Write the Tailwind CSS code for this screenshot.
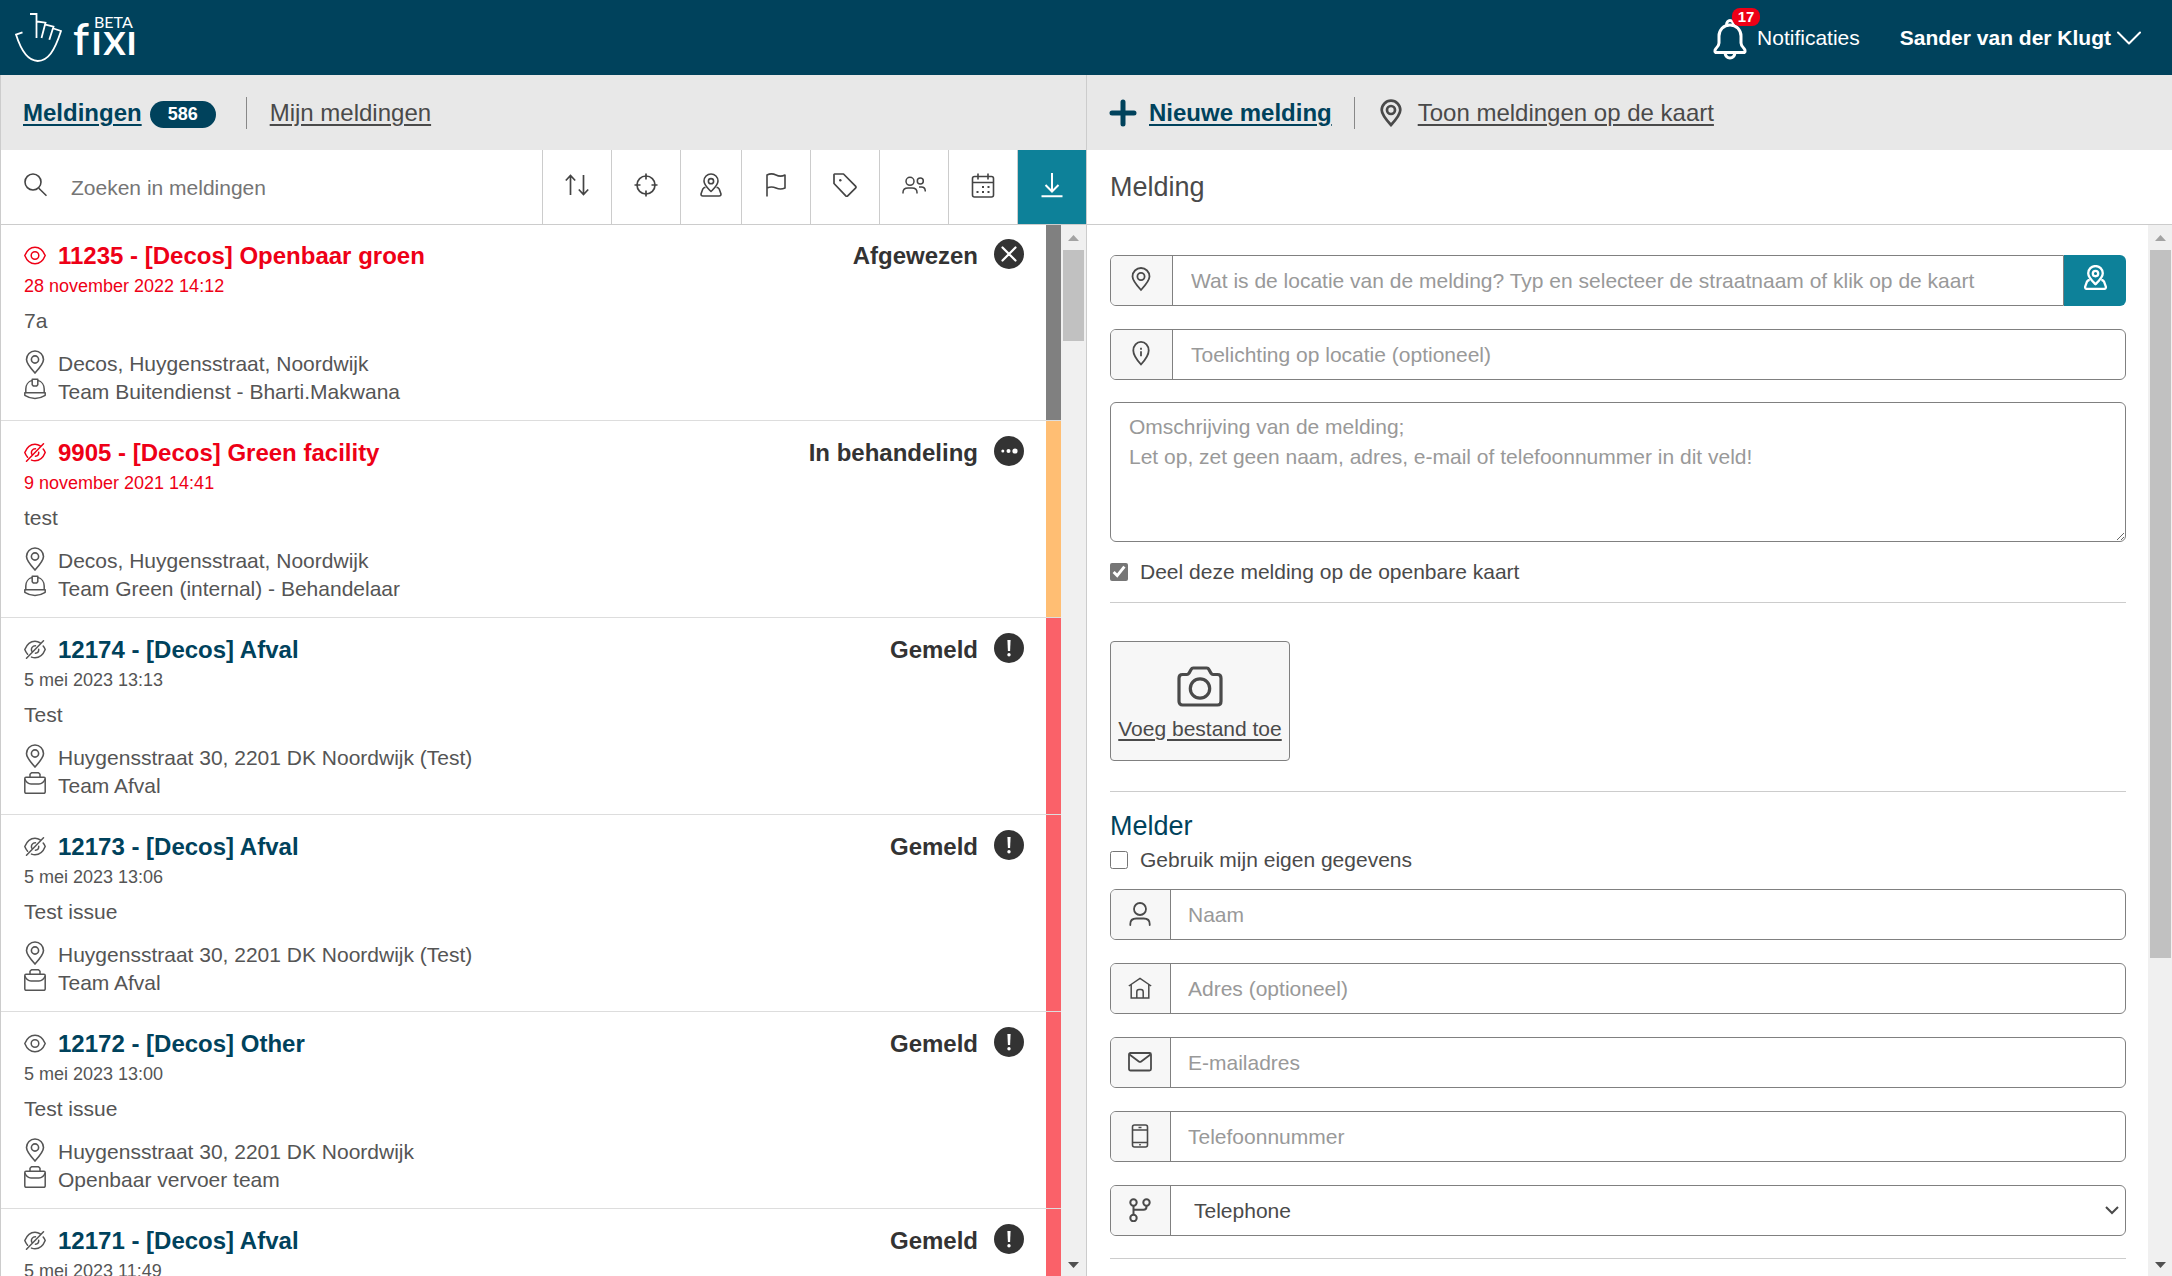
<!DOCTYPE html>
<html lang="nl">
<head>
<meta charset="utf-8">
<title>Fixi - Meldingen</title>
<script src="https://cdn.jsdelivr.net/npm/@tailwindcss/browser@4"></script>
</head>
<body class="flex h-screen flex-col overflow-hidden bg-white font-['Liberation_Sans',Arial,sans-serif] text-[21px] leading-[28px] text-[#555]">

<!-- Icon set -->
<svg class="hidden" aria-hidden="true">
  <symbol id="eye" viewBox="0 0 22 22"><g fill="none" stroke="currentColor" stroke-width="1.500"><path d="M.8 10.500C3 5 7 2.200 11 2.200S19 5 21.200 10.500C19 16 15 18.800 11 18.800S3 16 .8 10.500z"/><circle cx="11" cy="10.500" r="3.800"/></g></symbol>
  <symbol id="eye-off" viewBox="0 0 22 22"><g fill="none" stroke="currentColor" stroke-width="1.500" stroke-linecap="round"><path d="M3.600 15.200C2.400 13.900 1.500 12.400 .8 10.500 3 5 7 2.200 11 2.200c1.900 0 3.700.6 5.200 1.700M19.200 7c.8 1 1.500 2.200 2 3.500C19 16 15 18.800 11 18.800c-1.200 0-2.400-.3-3.500-.7M2.500 19.200 19.500 1.800M7.800 12.200C6.600 9.300 8.600 6.600 11.500 6.700M14.700 10.200c.2 2.200-1.300 3.900-3.300 4.100"/></g></symbol>
  <symbol id="pin" viewBox="0 0 22 24"><g fill="none" stroke="currentColor"><path d="M11 23C6 17.500 2.500 13.500 2.500 9.500a8.500 8.500 0 0 1 17 0C19.500 13.500 16 17.500 11 23z"/><circle cx="11" cy="9.500" r="3.600"/></g></symbol>
  <symbol id="pin-info" viewBox="0 0 22 24"><g fill="none" stroke="currentColor"><path d="M11 23.500C6 18 3.300 14 3.300 9.500a7.700 8.700 0 0 1 15.400 0C18.700 14 16 18 11 23.500z"/><path d="M11 6.800v1.900M11 10.300v5"/></g></symbol>
  <symbol id="helmet" viewBox="0 0 22 22"><g fill="none" stroke="currentColor" stroke-width="1.500" stroke-linejoin="round"><path d="M.8 14.800h20.400v2.500c-6.400 4-14 4-20.400 0zM1.800 14.800V11c0-4 2.600-7.600 6.300-8.600M20.200 14.800V11c0-4-2.600-7.600-6.300-8.600M8.200 1.200h5.600v5.600l-1.300 1.300h-3L8.200 6.800z"/></g></symbol>
  <symbol id="case" viewBox="0 0 22 22"><g fill="none" stroke="currentColor" stroke-width="1.500" stroke-linejoin="round"><rect x=".8" y="5.300" width="20.400" height="16" rx="1.200"/><path d="M6 5.300V2.300L7.500.8h7L16 2.300v3M.8 7c1.600 3.600 4.500 4.900 6.200 4.900h8c1.700 0 4.600-1.300 6.200-4.900"/></g></symbol>
  <symbol id="map-pin" viewBox="0 0 22 24"><g fill="none" stroke="currentColor" stroke-linejoin="round"><path d="M11 18.500C7.500 15 4 12 4 8a7 7 0 0 1 14 0c0 4-3.500 7-7 10.500z"/><circle cx="11" cy="8.200" r="2.600"/><path d="M5.500 14.500H4.300L2.800 16 1 21c0 1.300.6 2 1.800 2h16.400c1.200 0 1.800-.7 1.800-2l-1.800-5-1.500-1.500h-1.200"/></g></symbol>
  <symbol id="status-x" viewBox="0 0 30 30"><circle cx="15" cy="15" r="15" fill="#333"/><path d="M8.500 8.500l13 13M21.500 8.500l-13 13" stroke="#fff" stroke-width="2.200" stroke-linecap="round"/></symbol>
  <symbol id="status-dots" viewBox="0 0 30 30"><circle cx="15" cy="15" r="15" fill="#333"/><g fill="#fff"><circle cx="8.800" cy="15" r="1.500"/><circle cx="14.500" cy="15" r="2"/><circle cx="21" cy="15" r="2.600"/></g></symbol>
  <symbol id="status-bang" viewBox="0 0 30 30"><circle cx="15" cy="15" r="15" fill="#333"/><path d="M13.400 7h3.200l-.5 11h-2.200z" fill="#fff"/><circle cx="15" cy="21.700" r="1.700" fill="#fff"/></symbol>
</svg>

<header class="flex h-[75px] shrink-0 items-center bg-[#00425c] text-white">
  <a href="#" aria-label="Fixi beta" class="block">
    <svg width="140" height="75" viewBox="0 0 140 75" fill="none" stroke="#fff" stroke-width="1.800">
      <path d="M30 14h6.500v24M37 21.500l8.500 1.200L41.500 38M45.500 24.700l8 2-4.200 13M22.500 32.300 16 34.600C21.500 52 28 61 37.700 61 48 61 54.500 51 61 31l-7.500-2.500"/>
      <g fill="#fff" stroke="none" font-family="Lato, sans-serif">
        <text x="73 91 103 126" y="55" font-size="45" font-weight="600">fıxı</text>
        <text x="94" y="28" font-size="16">BETA</text>
      </g>
    </svg>
  </a>
  <a href="#" class="relative ml-auto flex items-center">
    <svg class="mt-0.5" width="34" height="42" viewBox="0 0 34 42" fill="none" stroke="#fff" stroke-width="3"><path d="M17 7c-6.500 0-11 5-11 11v7c0 2.500-1.300 4-3 5.500-1.500 1.500-1.500 4 .5 4h27c2 0 2-2.500.5-4-1.700-1.500-3-3-3-5.500v-7c0-6-4.500-11-11-11zM13.500 7c0-6 7-6 7 0M12 35c1 6.500 9 6.500 10 0"/></svg>
    <span class="absolute -top-2 left-[19px] h-[18px] w-7 rounded-lg bg-[#ee0016] text-center text-[15px] leading-[18px] font-bold">17</span>
    <span class="ml-2.5">Notificaties</span>
  </a>
  <button type="button" class="mr-[31px] ml-10 flex items-center gap-1.5 font-bold">Sander van der Klugt
    <svg width="24" height="14" viewBox="0 0 24 14" fill="none" stroke="#fff" stroke-width="2" stroke-linecap="round" stroke-linejoin="round"><path d="M1 1.500l11 11 11-11"/></svg>
  </button>
</header>

<main class="grid min-h-0 flex-1 grid-cols-2">

  <section class="flex min-h-0 flex-col border-l border-[#ccc]">
    <nav class="flex h-[75px] shrink-0 items-center bg-[#e8e8e8] pl-[22px] text-2xl">
      <a href="#" class="font-bold text-[#00425c] underline decoration-2 underline-offset-3">Meldingen</a>
      <span class="mt-1 ml-2 h-[27px] w-[66px] rounded-full bg-[#00425c] text-center text-lg leading-[27px] font-bold text-white">586</span>
      <span class="ml-[30px] h-8 w-px bg-[#888]"></span>
      <a href="#" class="ml-[23px] text-[#4a4a4a] underline decoration-2 underline-offset-3">Mijn meldingen</a>
    </nav>

    <div class="flex h-[75px] shrink-0 border-b border-[#ccc] text-[#444]">
      <label class="flex flex-1 items-center pl-[23px]">
        <svg class="mb-1" width="23" height="24" viewBox="0 0 23 24" fill="none" stroke="currentColor" stroke-width="1.6"><circle cx="9" cy="9" r="8"/><path d="M14.800 15.200l7.700 7.600"/></svg>
        <input type="search" aria-label="Zoeken in meldingen" placeholder="Zoeken in meldingen" class="ml-6 h-full flex-1 pt-0.5 outline-none placeholder:text-[#757575]">
      </label>
      <button type="button" aria-label="Sorteren" class="flex w-[69px] items-center justify-center border-l border-[#ccc] pb-1"><svg width="24" height="24" viewBox="0 0 24 24" fill="none" stroke="currentColor" stroke-width="1.700"><path d="M5.500 22V3M.8 7.500 5.500 2.500l4.700 5M18.500 2v19M13.800 16.500l4.700 5 4.700-5"/></svg></button>
      <button type="button" aria-label="Mijn locatie" class="flex w-[69px] items-center justify-center border-l border-[#ccc] pb-1"><svg width="24" height="24" viewBox="0 0 24 24" fill="none" stroke="currentColor" stroke-width="1.700"><circle cx="12" cy="12" r="9"/><path d="M12 .5v6M12 17.500v6M.5 12h6M17.500 12h6"/></svg></button>
      <button type="button" aria-label="Locatie" class="flex w-[61px] items-center justify-center border-l border-[#ccc] pb-1"><svg width="22" height="24" stroke-width="1.600"><use href="#map-pin"/></svg></button>
      <button type="button" aria-label="Status" class="flex w-[69px] items-center justify-center border-l border-[#ccc] pb-1"><svg width="20" height="24" viewBox="0 0 20 24" fill="none" stroke="currentColor" stroke-width="1.600" stroke-linejoin="round"><path d="M1 23.500V2c3-1.500 6-1.500 9 0s6 1.500 9 0v13c-3 1.300-6 1.300-9 0s-6-1.300-9 0"/></svg></button>
      <button type="button" aria-label="Categorie" class="flex w-[69px] items-center justify-center border-l border-[#ccc] pb-1"><svg width="24" height="24" viewBox="0 0 24 24" fill="none" stroke="currentColor" stroke-width="1.700" stroke-linejoin="round"><path d="M1.500 1h9l12 12.200c.6.600.6 1.300 0 1.900l-7.800 7.800c-.6.600-1.300.6-1.900 0L1 10.500V1.500z"/><circle cx="7.300" cy="7.300" r="1.200" fill="currentColor" stroke="none"/></svg></button>
      <button type="button" aria-label="Teams" class="flex w-[69px] items-center justify-center border-l border-[#ccc] pb-1"><svg width="24" height="24" viewBox="0 0 24 24" fill="none" stroke="currentColor" stroke-width="1.500"><circle cx="8" cy="8.300" r="4"/><path d="M1 20.500v-1c0-3.500 2.500-4.500 5-4.500h4c2.500 0 5 1 5 4.500v1"/><circle cx="18.300" cy="8" r="3"/><path d="M17 14h2.500c2.500 0 3.800 1.500 3.800 4.500"/></svg></button>
      <button type="button" aria-label="Datum" class="flex w-[69px] items-center justify-center border-l border-[#ccc] pb-1"><svg width="24" height="25" viewBox="0 0 24 25" fill="none" stroke="currentColor" stroke-width="1.600"><rect x="1.500" y="3.500" width="21" height="20.500" rx="2"/><path d="M1.500 9.500h21M7 .5v6M17 .5v6"/><path d="M11 14h2M16.500 14h2M5.500 19h2M11 19h2M16.500 19h2" stroke-width="1.800"/></svg></button>
      <button type="button" aria-label="Downloaden" class="flex w-[69px] items-center justify-center border-l border-[#ccc] bg-[#0d8199] pb-1 text-white"><svg width="24" height="26" viewBox="0 0 24 26" fill="none" stroke="currentColor" stroke-width="2"><path d="M12 1v18M5.500 13l6.500 6.500 6.500-6.500M1.500 24.300h21"/></svg></button>
    </div>

    <div class="flex min-h-0 flex-1">
      <div class="min-w-0 flex-1 overflow-hidden">

        <article class="-mt-px flex border-b border-[#ddd]">
          <div class="flex-1 pt-4 pb-3.5 pl-[23px]">
            <div class="flex h-8 items-center gap-3 text-2xl font-bold text-[#ee0016]"><svg width="22" height="22"><use href="#eye"/></svg><a href="#">11235 - [Decos] Openbaar groen</a></div>
            <p class="mt-0.5 text-lg leading-6 text-[#ee0016]">28 november 2022 14:12</p>
            <p class="mt-[9px]">7a</p>
            <p class="mt-[15px] flex gap-3"><svg width="22" height="24" stroke-width="1.600"><use href="#pin"/></svg>Decos, Huygensstraat, Noordwijk</p>
            <p class="flex gap-3"><svg width="22" height="22"><use href="#helmet"/></svg>Team Buitendienst - Bharti.Makwana</p>
          </div>
          <div class="mt-4 flex h-8 items-center gap-4 pr-[22px] text-2xl font-bold text-[#333]">Afgewezen<svg class="mb-1" width="30" height="30"><use href="#status-x"/></svg></div>
          <div class="w-[15px] bg-[#808080]"></div>
        </article>

        <article class="flex border-b border-[#ddd]">
          <div class="flex-1 pt-4 pb-3.5 pl-[23px]">
            <div class="flex h-8 items-center gap-3 text-2xl font-bold text-[#ee0016]"><svg width="22" height="22"><use href="#eye-off"/></svg><a href="#">9905 - [Decos] Green facility</a></div>
            <p class="mt-0.5 text-lg leading-6 text-[#ee0016]">9 november 2021 14:41</p>
            <p class="mt-[9px]">test</p>
            <p class="mt-[15px] flex gap-3"><svg width="22" height="24" stroke-width="1.600"><use href="#pin"/></svg>Decos, Huygensstraat, Noordwijk</p>
            <p class="flex gap-3"><svg width="22" height="22"><use href="#helmet"/></svg>Team Green (internal) - Behandelaar</p>
          </div>
          <div class="mt-4 flex h-8 items-center gap-4 pr-[22px] text-2xl font-bold text-[#333]">In behandeling<svg class="mb-1" width="30" height="30"><use href="#status-dots"/></svg></div>
          <div class="w-[15px] bg-[#ffbe73]"></div>
        </article>

        <article class="flex border-b border-[#ddd]">
          <div class="flex-1 pt-4 pb-3.5 pl-[23px]">
            <div class="flex h-8 items-center gap-3 text-2xl font-bold"><svg width="22" height="22"><use href="#eye-off"/></svg><a href="#" class="text-[#00425c]">12174 - [Decos] Afval</a></div>
            <p class="mt-0.5 text-lg leading-6">5 mei 2023 13:13</p>
            <p class="mt-[9px]">Test</p>
            <p class="mt-[15px] flex gap-3"><svg width="22" height="24" stroke-width="1.600"><use href="#pin"/></svg>Huygensstraat 30, 2201 DK Noordwijk (Test)</p>
            <p class="flex gap-3"><svg width="22" height="22"><use href="#case"/></svg>Team Afval</p>
          </div>
          <div class="mt-4 flex h-8 items-center gap-4 pr-[22px] text-2xl font-bold text-[#333]">Gemeld<svg class="mb-1" width="30" height="30"><use href="#status-bang"/></svg></div>
          <div class="w-[15px] bg-[#fa6169]"></div>
        </article>

        <article class="flex border-b border-[#ddd]">
          <div class="flex-1 pt-4 pb-3.5 pl-[23px]">
            <div class="flex h-8 items-center gap-3 text-2xl font-bold"><svg width="22" height="22"><use href="#eye-off"/></svg><a href="#" class="text-[#00425c]">12173 - [Decos] Afval</a></div>
            <p class="mt-0.5 text-lg leading-6">5 mei 2023 13:06</p>
            <p class="mt-[9px]">Test issue</p>
            <p class="mt-[15px] flex gap-3"><svg width="22" height="24" stroke-width="1.600"><use href="#pin"/></svg>Huygensstraat 30, 2201 DK Noordwijk (Test)</p>
            <p class="flex gap-3"><svg width="22" height="22"><use href="#case"/></svg>Team Afval</p>
          </div>
          <div class="mt-4 flex h-8 items-center gap-4 pr-[22px] text-2xl font-bold text-[#333]">Gemeld<svg class="mb-1" width="30" height="30"><use href="#status-bang"/></svg></div>
          <div class="w-[15px] bg-[#fa6169]"></div>
        </article>

        <article class="flex border-b border-[#ddd]">
          <div class="flex-1 pt-4 pb-3.5 pl-[23px]">
            <div class="flex h-8 items-center gap-3 text-2xl font-bold"><svg width="22" height="22"><use href="#eye"/></svg><a href="#" class="text-[#00425c]">12172 - [Decos] Other</a></div>
            <p class="mt-0.5 text-lg leading-6">5 mei 2023 13:00</p>
            <p class="mt-[9px]">Test issue</p>
            <p class="mt-[15px] flex gap-3"><svg width="22" height="24" stroke-width="1.600"><use href="#pin"/></svg>Huygensstraat 30, 2201 DK Noordwijk</p>
            <p class="flex gap-3"><svg width="22" height="22"><use href="#case"/></svg>Openbaar vervoer team</p>
          </div>
          <div class="mt-4 flex h-8 items-center gap-4 pr-[22px] text-2xl font-bold text-[#333]">Gemeld<svg class="mb-1" width="30" height="30"><use href="#status-bang"/></svg></div>
          <div class="w-[15px] bg-[#fa6169]"></div>
        </article>

        <article class="flex border-b border-[#ddd]">
          <div class="flex-1 pt-4 pb-3.5 pl-[23px]">
            <div class="flex h-8 items-center gap-3 text-2xl font-bold"><svg width="22" height="22"><use href="#eye-off"/></svg><a href="#" class="text-[#00425c]">12171 - [Decos] Afval</a></div>
            <p class="mt-0.5 text-lg leading-6">5 mei 2023 11:49</p>
          </div>
          <div class="mt-4 flex h-8 items-center gap-4 pr-[22px] text-2xl font-bold text-[#333]">Gemeld<svg class="mb-1" width="30" height="30"><use href="#status-bang"/></svg></div>
          <div class="w-[15px] bg-[#fa6169]"></div>
        </article>
      </div>

      <div class="flex w-[25px] shrink-0 flex-col bg-[#f0f0f0] px-0.5" aria-hidden="true">
        <svg class="mx-auto mt-[10px] mb-[9px] shrink-0" width="11" height="6" viewBox="0 0 11 6"><path d="M0 6 5.500 0 11 6z" fill="#a3a3a3"/></svg>
        <div class="h-[91px] bg-[#c1c1c1]"></div>
        <svg class="mx-auto mt-auto mb-2 shrink-0" width="11" height="6" viewBox="0 0 11 6"><path d="M0 0 5.500 6 11 0z" fill="#505050"/></svg>
      </div>
    </div>
  </section>

  <section class="flex min-h-0 flex-col border-l border-[#ccc] text-[#4a4a4a]">
    <nav class="flex h-[75px] shrink-0 items-center bg-[#e8e8e8] pl-[22px] text-2xl">
      <svg width="28" height="28" viewBox="0 0 28 28" stroke="#00425c" stroke-width="5" stroke-linecap="round"><path d="M14 3v22M3 14h22"/></svg>
      <a href="#" class="ml-3 font-bold text-[#00425c] underline decoration-2 underline-offset-3">Nieuwe melding</a>
      <span class="ml-[22px] h-8 w-px bg-[#888]"></span>
      <svg class="ml-[25px]" width="22" height="28" viewBox="0 0 22 28" fill="none" stroke="currentColor" stroke-width="2.700"><path d="M11 26C6 20.500 1.700 15.500 1.700 11a9.300 9.300 0 0 1 18.600 0c0 4.500-4.300 9.500-9.300 15z"/><circle cx="11" cy="11" r="4"/></svg>
      <a href="#" class="ml-4 underline decoration-2 underline-offset-3">Toon meldingen op de kaart</a>
    </nav>

    <h1 class="flex h-[75px] shrink-0 items-center border-b border-[#ccc] pl-[23px] text-[27px]">Melding</h1>

    <div class="flex min-h-0 flex-1">
      <form class="min-w-0 flex-1 overflow-hidden pt-[30px] pr-[22px] pl-[23px]">
        <div class="flex h-[51px]">
          <div class="flex flex-1 overflow-hidden rounded-l-md border border-[#808080]">
            <label for="locatie" class="flex w-[62px] items-center justify-center border-r border-[#808080] bg-[#f7f7f7] pr-px pb-1"><svg width="22" height="26" stroke-width="1.800"><use href="#pin"/></svg></label>
            <input id="locatie" type="text" placeholder="Wat is de locatie van de melding? Typ en selecteer de straatnaam of klik op de kaart" class="flex-1 px-[18px] outline-none placeholder:text-[#999]">
          </div>
          <button type="button" aria-label="Kies op de kaart" class="flex w-[62px] items-center justify-center rounded-r-md bg-[#0d8199] pb-1.5 text-white"><svg width="23" height="25" stroke-width="2.200"><use href="#map-pin"/></svg></button>
        </div>

        <div class="mt-[23px] flex h-[51px] overflow-hidden rounded-md border border-[#808080]">
          <label for="toelichting" class="flex w-[62px] items-center justify-center border-r border-[#808080] bg-[#f7f7f7] pr-px pb-1"><svg width="22" height="26" stroke-width="1.800"><use href="#pin-info"/></svg></label>
          <input id="toelichting" type="text" placeholder="Toelichting op locatie (optioneel)" class="flex-1 px-[18px] outline-none placeholder:text-[#999]">
        </div>

        <textarea aria-label="Omschrijving van de melding" class="mt-[22px] block h-[140px] w-full resize rounded-md border border-[#808080] px-[18px] py-[9px] leading-[30px] outline-none placeholder:text-[#999]" placeholder="Omschrijving van de melding;&#10;Let op, zet geen naam, adres, e-mail of telefoonnummer in dit veld!"></textarea>

        <label class="mt-[15px] flex h-[30px] items-center gap-3"><input type="checkbox" checked class="size-[18px] accent-[#767676]">Deel deze melding op de openbare kaart</label>
        <hr class="mt-[15px] border-[#ccc]">

        <button type="button" class="mt-[38px] flex h-[120px] w-[180px] flex-col items-center rounded border border-[#808080] bg-[#f7f7f7] pt-6">
          <svg class="shrink-0" width="46" height="41" viewBox="0 0 46 41" fill="none" stroke="currentColor" stroke-width="3.200" stroke-linejoin="round"><path d="M5.500 8.500h4.500c1 0 1.500-.5 2-1.300l2.200-4c.4-.8 1-1.200 2-1.200h13.600c1 0 1.600.4 2 1.200l2.200 4c.5.8 1 1.300 2 1.300h4.500c2.300 0 3.500 1.500 3.500 3.700v23c0 2.200-1.200 3.800-3.500 3.800h-35C3.200 39 2 37.400 2 35.200v-23c0-2.200 1.200-3.700 3.500-3.700z"/><circle cx="23" cy="22.500" r="9.700"/></svg>
          <span class="mt-[7px] leading-[30px] underline decoration-2 underline-offset-3">Voeg bestand toe</span>
        </button>
        <hr class="mt-[30px] border-[#ccc]">

        <h2 class="mt-4 text-[27px] leading-9 text-[#00425c]">Melder</h2>
        <label class="mt-px flex h-[30px] items-center gap-3"><input type="checkbox" class="size-[18px]">Gebruik mijn eigen gegevens</label>

        <div class="mt-3.5 grid gap-[23px]">
          <div class="flex h-[51px] overflow-hidden rounded-md border border-[#808080]">
            <label for="naam" class="flex w-[60px] items-center justify-center border-r border-[#808080] bg-[#f7f7f7] pr-px pb-px"><svg width="24" height="24" viewBox="0 0 24 24" fill="none" stroke="currentColor" stroke-width="1.800" stroke-linecap="round"><circle cx="12" cy="7" r="6"/><path d="M2.300 23v-1c0-4 3-5.500 6-5.500h7.400c3 0 6 1.500 6 5.500v1"/></svg></label>
            <input id="naam" type="text" placeholder="Naam" class="flex-1 px-[17px] outline-none placeholder:text-[#999]">
          </div>
          <div class="flex h-[51px] overflow-hidden rounded-md border border-[#808080]">
            <label for="adres" class="flex w-[60px] items-center justify-center border-r border-[#808080] bg-[#f7f7f7] pr-px pb-px"><svg width="24" height="24" viewBox="0 0 24 24" fill="none" stroke="currentColor" stroke-width="1.500"><path d="M.8 10 12 2.500 23.200 10M3.200 8.500V22h17.600V8.500M8.800 22v-6.200c0-1.500 1-2.300 2.200-2.300h2c1.200 0 2.200.8 2.200 2.300V22"/></svg></label>
            <input id="adres" type="text" placeholder="Adres (optioneel)" class="flex-1 px-[17px] outline-none placeholder:text-[#999]">
          </div>
          <div class="flex h-[51px] overflow-hidden rounded-md border border-[#808080]">
            <label for="email" class="flex w-[60px] items-center justify-center border-r border-[#808080] bg-[#f7f7f7] pr-px pb-px"><svg width="24" height="24" viewBox="0 0 24 24" fill="none" stroke="currentColor" stroke-width="1.800" stroke-linejoin="round"><rect x="1" y="3" width="22" height="17.500" rx="1.500"/><path d="M1.500 4.500 10.800 11.500q1.200.9 2.400 0L22.500 4.500"/></svg></label>
            <input id="email" type="email" placeholder="E-mailadres" class="flex-1 px-[17px] outline-none placeholder:text-[#999]">
          </div>
          <div class="flex h-[51px] overflow-hidden rounded-md border border-[#808080]">
            <label for="tel" class="flex w-[60px] items-center justify-center border-r border-[#808080] bg-[#f7f7f7] pr-px pb-px"><svg width="24" height="24" viewBox="0 0 24 24" fill="none" stroke="currentColor" stroke-width="1.600"><rect x="4.500" y="1" width="15" height="22" rx="2"/><path d="M4.500 6h15M4.500 18.500h15M10.500 3.500h3M11.200 20.800h1.600"/></svg></label>
            <input id="tel" type="tel" placeholder="Telefoonnummer" class="flex-1 px-[17px] outline-none placeholder:text-[#999]">
          </div>
          <div class="relative flex h-[51px] overflow-hidden rounded-md border border-[#808080]">
            <label for="kanaal" class="flex w-[60px] items-center justify-center border-r border-[#808080] bg-[#f7f7f7] pr-px pb-px"><svg width="24" height="24" viewBox="0 0 24 24" fill="none" stroke="currentColor" stroke-width="2"><circle cx="5.500" cy="4.500" r="3.200"/><circle cx="18.500" cy="4.500" r="3.200"/><circle cx="5.500" cy="20" r="3.200"/><path d="M5.500 7.700v9.100M5.500 11.800h10c2 0 3-1 3-3V7.700"/></svg></label>
            <select id="kanaal" class="flex-1 appearance-none px-[23px] outline-none"><option>Telephone</option></select>
            <svg class="pointer-events-none absolute top-5 right-1.5" width="14" height="9" viewBox="0 0 14 9" fill="none" stroke="currentColor" stroke-width="2"><path d="M1 1l6 6 6-6"/></svg>
          </div>
        </div>
        <hr class="mt-[22px] border-[#ccc]">
      </form>

      <div class="flex w-6 shrink-0 flex-col bg-[#f0f0f0] pr-px pl-0.5" aria-hidden="true">
        <svg class="mx-auto mt-[10px] mb-[9px] shrink-0" width="11" height="6" viewBox="0 0 11 6"><path d="M0 6 5.500 0 11 6z" fill="#a3a3a3"/></svg>
        <div class="h-[708px] bg-[#c1c1c1]"></div>
        <svg class="mx-auto mt-auto mb-2 shrink-0" width="11" height="6" viewBox="0 0 11 6"><path d="M0 0 5.500 6 11 0z" fill="#505050"/></svg>
      </div>
    </div>
  </section>
</main>
</body>
</html>
